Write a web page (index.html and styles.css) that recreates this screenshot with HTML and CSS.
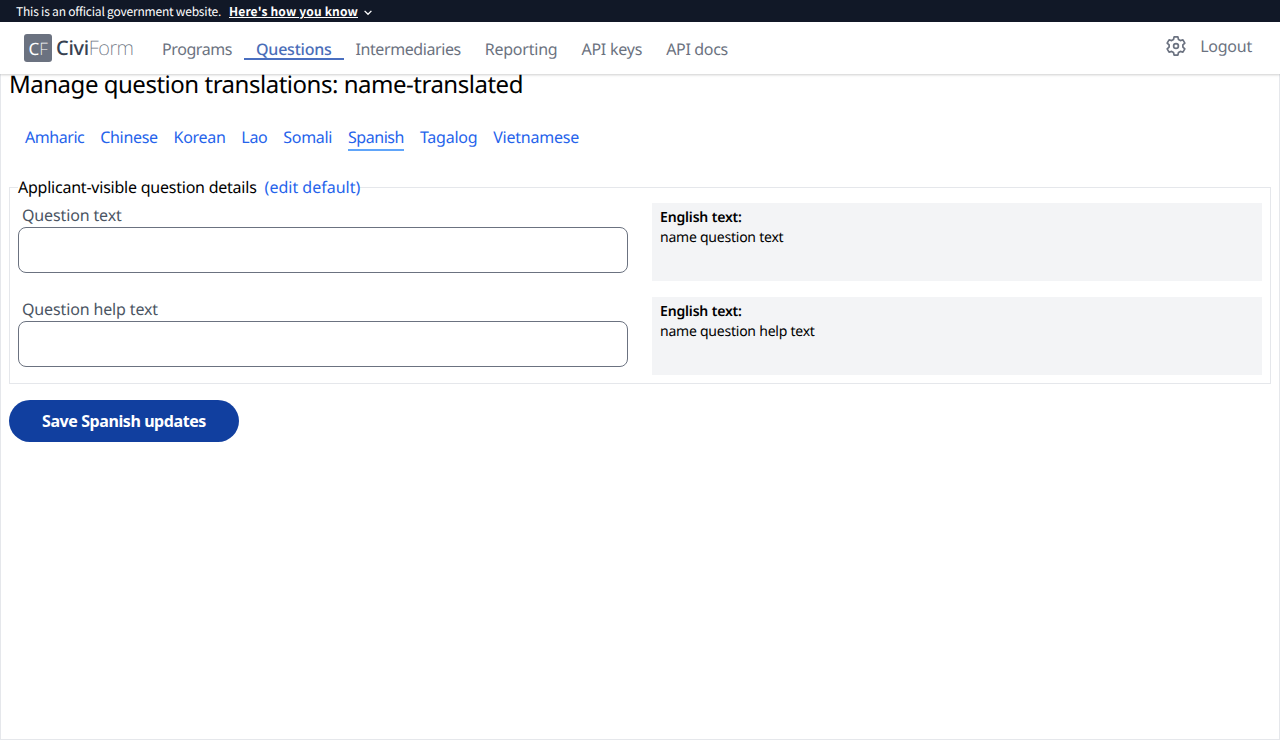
FILE: index.html
```
<!DOCTYPE html>
<html lang="en">
<head>
<meta charset="utf-8">
<title>Manage question translations: name-translated</title>
<link rel="stylesheet" href="styles.css">
</head>
<body>
<header class="site-header">
  <div class="banner">
    <span class="banner-text">This is an official government website.</span>
    <a class="banner-link">Here's how you know</a>
    <svg class="chevron" width="8" height="6" viewBox="0 0 8 6"><path d="M.6.9 4 4.300 7.400.9" fill="none" stroke="currentColor" stroke-width="1.300"/></svg>
  </div>
  <div class="navbar">
    <div class="logo">
      <span class="logo-mark">C<span class="thin">F</span></span>
      <span class="logo-name">Civi<span class="thin">Form</span></span>
    </div>
    <nav class="nav">
      <a class="nav-item s40">Programs</a>
      <a class="nav-item active s20">Questions</a>
      <a class="nav-item s40">Intermediaries</a>
      <a class="nav-item s20">Reporting</a>
      <a class="nav-item s20">API keys</a>
      <a class="nav-item s30">API docs</a>
    </nav>
    <div class="account">
      <svg class="gear" width="24" height="24" viewBox="-12 -12 24 24" fill="none" stroke="currentColor" stroke-width="1.700" stroke-linejoin="round"><path d="M-2.500-6.500-1.900-9.100H1.900L2.500-6.500 4.380-5.420 6.930-6.200 8.830-2.900 6.880-1.090V1.090L8.830 2.900 6.930 6.200 4.380 5.420 2.500 6.500 1.900 9.100H-1.900L-2.500 6.500-4.380 5.420-6.930 6.200-8.830 2.900-6.880 1.090V-1.090L-8.830-2.900-6.930-6.200-4.380-5.420Z"/><circle r="2.400"/></svg>
      <a class="logout s20">Logout</a>
    </div>
  </div>
</header>
<main class="page">
  <h1 class="title">Manage question translations: name-translated</h1>
  <div class="tabs">
    <a class="tab s43">Amharic</a>
    <a class="tab s30">Chinese</a>
    <a class="tab s30">Korean</a>
    <a class="tab s30">Lao</a>
    <a class="tab s30">Somali</a>
    <a class="tab selected s43">Spanish</a>
    <a class="tab s20">Tagalog</a>
    <a class="tab s20">Vietnamese</a>
  </div>
  <form>
    <fieldset class="details">
      <legend class="legend"><span class="s20">Applicant-visible question details</span><a class="edit-link">(edit default)</a></legend>
      <div class="rows">
        <div class="field">
          <label class="label" for="q-text">Question text</label>
          <input class="input" id="q-text" type="text">
        </div>
        <div class="source"><div class="source-title">English text:</div><div class="s20">name question text</div></div>
        <div class="field">
          <label class="label" for="q-help">Question help text</label>
          <input class="input" id="q-help" type="text">
        </div>
        <div class="source"><div class="source-title">English text:</div><div class="s20">name question help text</div></div>
      </div>
    </fieldset>
    <button class="save" type="button">Save Spanish updates</button>
  </form>
</main>
</body>
</html>
```

FILE: styles.css
```
* { box-sizing: border-box; }
body {
  margin: 0;
  height: 740px;
  display: flex;
  flex-direction: column;
  background: #fff;
  color: #000;
  font: 16px/24px "Noto Sans", sans-serif;
  text-rendering: geometricPrecision;
  overflow: hidden;
}

/* tracking steps */
.s20 { letter-spacing: -.23px; }
.s30 { letter-spacing: -.32px; }
.s40 { letter-spacing: -.42px; }
.s43 { letter-spacing: -.45px; }

.site-header { flex: none; z-index: 1; background: #fff; box-shadow: 0 1px 3px rgba(0,0,0,.1), 0 1px 2px rgba(0,0,0,.1); }
.banner {
  height: 22px;
  padding: 2px 16px 0;
  display: flex;
  align-items: center;
  background: #111827;
  color: #fff;
  font: 12px/20px "Noto Sans CJK JP", sans-serif;
}
.banner-text { width: 213px; letter-spacing: -.2px; white-space: nowrap; }
.banner-link { font-weight: 700; letter-spacing: .16px; text-decoration: underline; }
.chevron { margin: 1px 0 0 6px; }

.navbar { height: 52px; padding: 0 28px 0 24px; display: flex; align-items: center; color: #6b7280; }
.logo { width: 126px; display: flex; align-items: center; gap: 4px; }
.logo-mark {
  width: 28px;
  height: 28px;
  border-radius: 3px;
  background: #6b7280;
  color: #fff;
  font-size: 17px;
  line-height: 29px;
  text-align: center;
}
.logo-name { font-size: 20px; line-height: 28px; color: #374151; letter-spacing: -.3px; font-weight: 500; }
.thin { font-weight: 200; }
.logo-name .thin { color: #6b7280; letter-spacing: -.5px; }
.nav { display: flex; }
.nav-item { padding: 1px 12px 0; height: 24px; border-bottom: 2px solid transparent; line-height: 24px; }
.nav-item.active { color: #4a6db8; border-color: #4a6fc0; font-weight: 500; }
.account { margin-left: auto; display: flex; align-items: center; gap: 12px; padding-bottom: 4px; }

.page { flex: 1; margin-top: -6px; padding: 0 8px; border: 1px solid #e5e7eb; }
.title { margin: 0; font-size: 24px; line-height: 32px; font-weight: 400; letter-spacing: -.48px; }
.tabs { display: flex; gap: 15.9px; padding: 24px 16px; color: #2563eb; }
.tab { border-bottom: 2px solid transparent; }
.selected { border-color: #60a5fa; }

.details { margin: 0; padding: 4px 8px 8px; border: 1px solid #e5e7eb; }
.legend { padding: 0; }
.edit-link { margin-left: 8px; color: #2563eb; }
.rows { display: grid; grid-template-columns: 1fr 1fr; gap: 16px 24px; }
.field { height: 78px; }
.label { display: block; padding-left: 4px; color: #4b5563; letter-spacing: -.14px; }
.input { display: block; width: 100%; height: 46px; border: 1px solid #6b7280; border-radius: 8px; background: #fff; }
.source { padding: 5px 8px 3px; background: #f3f4f6; font-size: 14px; line-height: 20px; }
.source-title { font-weight: 600; letter-spacing: -.16px; }
.save {
  display: block;
  width: 230px;
  height: 42px;
  margin-top: 16px;
  padding: 0;
  border: 0;
  border-radius: 21px;
  background: #113f9f;
  color: #fff;
  font: 700 16px/24px "Noto Sans", sans-serif;
  letter-spacing: -.42px;
}
```
